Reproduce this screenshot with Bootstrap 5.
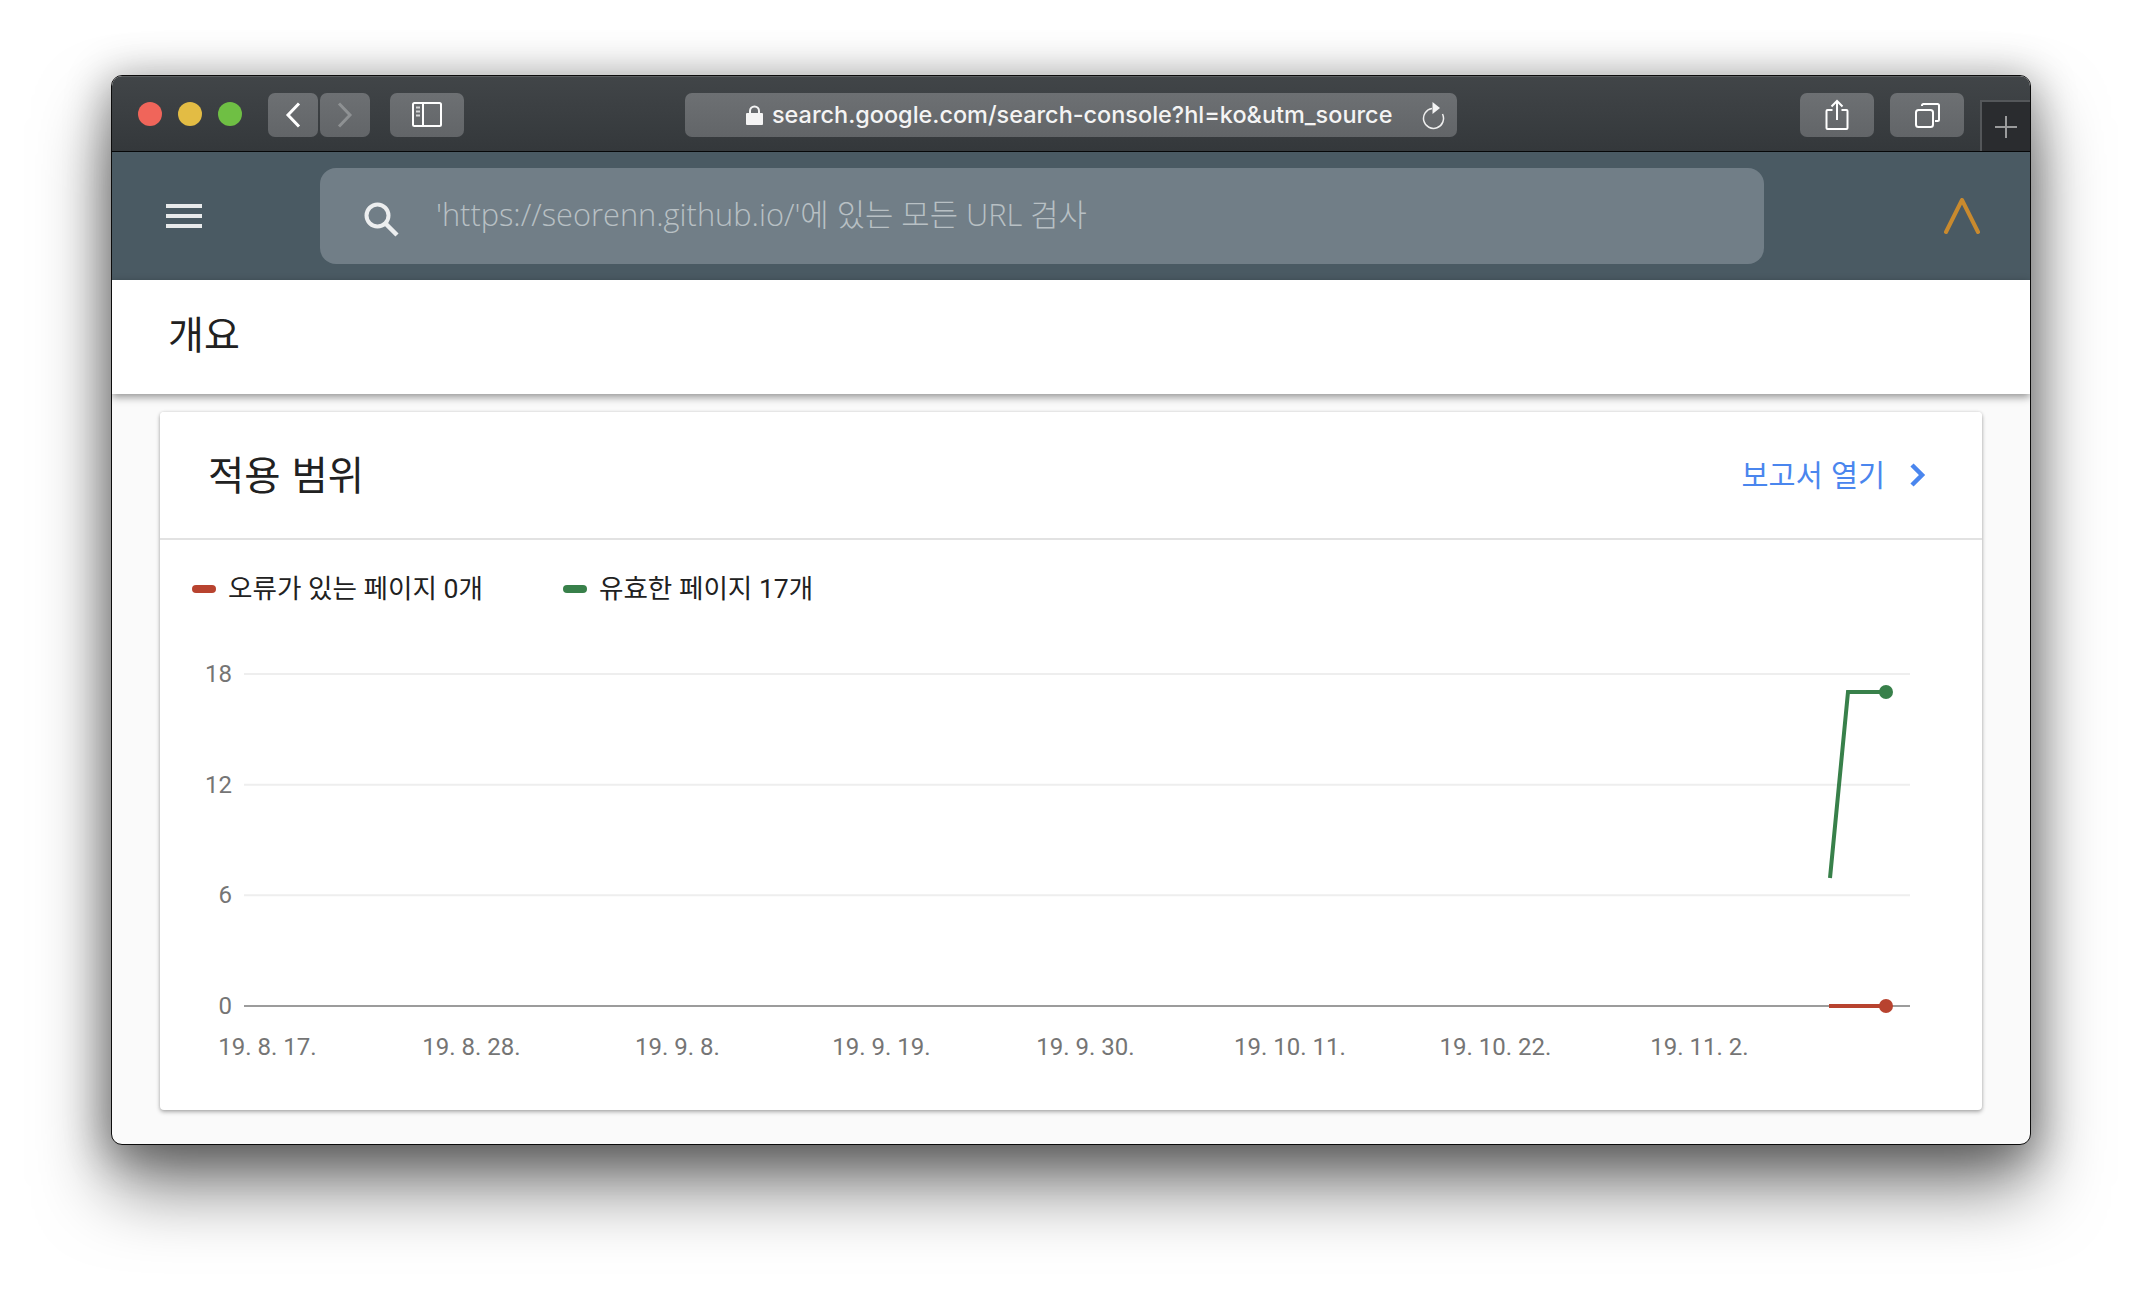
<!DOCTYPE html>
<html lang="ko">
<head>
<meta charset="utf-8">
<title>개요</title>
<link rel="stylesheet" href="https://cdn.jsdelivr.net/npm/bootstrap@5.3.0/dist/css/bootstrap.min.css">
<style>
html,body{background:#fff;margin:0;height:100%;overflow:hidden}
body{font-family:Roboto,"Noto Sans CJK KR",sans-serif;padding:75px 0 0 111px}
.mac-win{width:1920px;height:1070px;border:1px solid #0c0c0c;border-radius:11px;background:#fafafa;box-shadow:0 42px 72px 0 rgba(0,0,0,.52),0 6px 40px 6px rgba(0,0,0,.3);overflow:hidden;box-sizing:border-box}
.title-bar{height:76px;padding:16px 0 0 26px;background:linear-gradient(#414548,#34383b);border-bottom:1px solid #060708;border-top:1px solid #5c5f61}
.dot{width:24px;height:24px;border-radius:50%;margin-top:9px}
.tb-btn{height:44px;border-radius:7px;background:linear-gradient(#6d7073,#626568);border:0;padding:0;flex:none}
.tb-back{width:50px;margin-left:26px}
.tb-fwd{width:50px;margin-left:2px}
.tb-side{width:74px;margin-left:20px}
.url-field{width:772px;margin-left:221px;color:#f4f4f4;position:relative;font-family:Inter,Roboto,sans-serif;font-size:23.45px;font-weight:500;padding-left:61px}
.tb-share{width:74px;margin-left:343px}
.tb-copy{width:74px;margin-left:16px}
.plus-tab{width:50px;height:51px;margin-left:16px;margin-top:7px;background:#2a2c2f;border-left:2px solid #54575a;border-top:2px solid #54575a}
.url-text{white-space:nowrap;margin-left:1px}
.reload-ic{position:absolute;left:736px;top:8px}
.g-head{height:128px;background:#4a5a63;padding-left:54px}
.g-search{width:1444px;height:96px;margin-left:118px;background:#717e87;border-radius:16px;padding-left:44px;color:#b8c0c4;font-size:30.8px;font-weight:300;font-family:"Open Sans","Noto Sans CJK KR",sans-serif}
.g-search span{margin-left:36px;margin-bottom:4px;white-space:nowrap}
.search-ic{margin-top:7px}
.caret-ic{margin-left:180px}
.page-head{height:114px;background:#fff;padding:0 0 10px 56px;font-size:39px;color:#212121;font-family:"Noto Sans CJK KR",sans-serif;box-shadow:0 3px 8px rgba(0,0,0,.42);position:relative}
.main-area{padding:18px 48px 0 48px}
.cov-card{height:698px;width:1822px;border:0;border-radius:4px;box-shadow:0 2px 4px rgba(0,0,0,.3),0 0 3px rgba(0,0,0,.12);overflow:hidden}
.cov-head{height:128px;background:#fff;border-bottom:2px solid #e2e2e2;padding:0 55px 0 48px}
.cov-title{font-size:39.400px;color:#212121;font-family:"Noto Sans CJK KR",sans-serif;margin-bottom:5px}
.cov-link{font-size:29.400px;color:#4a86ee;text-decoration:none;font-family:"Noto Sans CJK KR",sans-serif;line-height:1.2}
.cov-link-text{margin-top:-3px;margin-left:2px}
.cov-link svg{margin-left:24px}
.legend-row{padding:29px 32px 0;height:80px;gap:80px;font-size:26.6px;color:#212121;font-family:Roboto,"Noto Sans CJK KR",sans-serif}
.swatch{width:24px;height:8px;border-radius:4px;margin-right:12px}
.sw-red{background:#b8432f}
.sw-green{background:#38804a}
.chart-svg{display:block}
.chart-svg text{font-family:Roboto,sans-serif;font-size:24px;fill:#757575}
</style>
</head>
<body>
<div class="mac-win">
  <div class="title-bar d-flex align-items-start">
    <div class="dot me-3" style="background:#f0655a"></div>
    <div class="dot me-3" style="background:#e3bc44"></div>
    <div class="dot" style="background:#6fbf44"></div>
    <button class="tb-btn tb-back d-flex align-items-center justify-content-center" aria-label="뒤로"><svg width="16" height="26" viewBox="0 0 16 26"><path d="M14 1.500 3 13l11 11.500" fill="none" stroke="#fff" stroke-width="3"/></svg></button>
    <button class="tb-btn tb-fwd d-flex align-items-center justify-content-center" aria-label="앞으로"><svg width="16" height="26" viewBox="0 0 16 26"><path d="M2 1.500 13 13 2 24.500" fill="none" stroke="#8e9193" stroke-width="3"/></svg></button>
    <button class="tb-btn tb-side d-flex align-items-center justify-content-center" aria-label="사이드바"><svg width="32" height="26" viewBox="0 0 32 26"><rect x="2" y="1" width="28" height="23" rx="1.500" fill="none" stroke="#fff" stroke-width="2"/><path d="M12 1v23" stroke="#fff" stroke-width="2"/><path d="M5 5.500h4M5 9.500h4M5 13.500h4" stroke="#d4d5d6" stroke-width="2"/></svg></button>
    <div class="tb-btn url-field d-flex align-items-center">
      <svg width="17" height="20" viewBox="0 0 17 20" class="me-2 flex-none"><path d="M4 9V6a4.500 4.500 0 0 1 9 0v3" fill="none" stroke="#f4f4f4" stroke-width="2"/><rect x="0" y="8" width="17" height="12" rx="1" fill="#f4f4f4"/></svg>
      <span class="url-text">search.google.com/search-console?hl=ko&amp;utm_source</span>
      <svg class="reload-ic" width="24" height="30" viewBox="0 0 24 30"><path d="M11 7.500A10 10 0 1 0 21.500 13" fill="none" stroke="#eee" stroke-width="1.500"/><path d="M11.500 1l7.500 6-7.500 6z" fill="#f4f4f4"/></svg>
    </div>
    <button class="tb-btn tb-share d-flex align-items-center justify-content-center" aria-label="공유"><svg width="24" height="32" viewBox="0 0 24 32"><path d="M7.500 11H2.500a1 1 0 0 0-1 1v17a1 1 0 0 0 1 1h19a1 1 0 0 0 1-1V12a1 1 0 0 0-1-1h-5" fill="none" stroke="#fff" stroke-width="2"/><path d="M12 21V2M6.500 7.500 12 2l5.500 5.500" fill="none" stroke="#fff" stroke-width="2"/></svg></button>
    <button class="tb-btn tb-copy d-flex align-items-center justify-content-center" aria-label="탭"><svg width="25" height="25" viewBox="0 0 25 25"><rect x="1" y="7" width="17" height="17" rx="2.500" fill="none" stroke="#fff" stroke-width="2"/><path d="M7 3V2.500A1.500 1.500 0 0 1 8.500 1h14A1.500 1.500 0 0 1 24 2.500v14a1.500 1.500 0 0 1-1.500 1.500H20" fill="none" stroke="#fff" stroke-width="2"/></svg></button>
    <div class="plus-tab d-flex align-items-center justify-content-center"><svg width="22" height="22" viewBox="0 0 22 22"><path d="M11 0v22M0 11h22" stroke="#9a9b9c" stroke-width="2"/></svg></div>
  </div>

  <div class="g-head d-flex align-items-center">
    <svg width="36" height="24" viewBox="0 0 36 24"><path d="M0 2h36M0 12h36M0 22h36" stroke="#e8eaeb" stroke-width="4"/></svg>
    <div class="g-search d-flex align-items-center">
      <svg width="36" height="36" viewBox="0 0 36 36" class="flex-none search-ic"><circle cx="13.500" cy="13.500" r="11" fill="none" stroke="#eceeef" stroke-width="4"/><path d="M21.500 21.500 33 33" stroke="#eceeef" stroke-width="4.500"/></svg>
      <span>'https://seorenn.github.io/'에 있는 모든 URL 검사</span>
    </div>
    <svg class="caret-ic" width="36" height="36" viewBox="0 0 36 36"><path d="M2 34 18 2l16 32" fill="none" stroke="#c98a2e" stroke-width="4" stroke-linecap="round" stroke-linejoin="round"/></svg>
  </div>

  <div class="page-head d-flex align-items-center">개요</div>

  <div class="main-area">
    <div class="card cov-card">
      <div class="cov-head d-flex align-items-center justify-content-between">
        <div class="cov-title">적용 범위</div>
        <a class="cov-link d-flex align-items-center" href="#"><span class="cov-link-text">보고서 열기</span><svg width="18" height="26" viewBox="0 0 18 26"><path d="M3 3l10 10L3 23" fill="none" stroke="#4a86ee" stroke-width="4.500"/></svg></a>
      </div>
      <div class="legend-row d-flex align-items-start">
        <div class="d-flex align-items-center"><span class="swatch sw-red"></span>오류가 있는 페이지 0개</div>
        <div class="d-flex align-items-center"><span class="swatch sw-green"></span>유효한 페이지 17개</div>
      </div>
      <svg class="chart-svg" width="1822" height="490" viewBox="0 0 1822 490">
        <path d="M84 54H1750M84 164.700H1750M84 275.300H1750" stroke="#eeeeee" stroke-width="2"/>
        <path d="M84 386H1750" stroke="#9c9c9c" stroke-width="2"/>
        <g text-anchor="end" dominant-baseline="central">
          <text x="72" y="54">18</text><text x="72" y="164.700">12</text><text x="72" y="275.300">6</text><text x="72" y="386">0</text>
        </g>
        <g text-anchor="middle">
          <text x="107.500" y="435">19. 8. 17.</text><text x="311.500" y="435">19. 8. 28.</text><text x="517.500" y="435">19. 9. 8.</text><text x="721.500" y="435">19. 9. 19.</text><text x="925.500" y="435">19. 9. 30.</text><text x="1130" y="435">19. 10. 11.</text><text x="1335.500" y="435">19. 10. 22.</text><text x="1539.500" y="435">19. 11. 2.</text>
        </g>
        <path d="M1670 258 1688 72H1726" fill="none" stroke="#38804a" stroke-width="4"/>
        <circle cx="1726" cy="72" r="7" fill="#38804a"/>
        <path d="M1669 386H1726" stroke="#b8432f" stroke-width="4"/>
        <circle cx="1726" cy="386" r="7" fill="#b8432f"/>
      </svg>
    </div>
  </div>
</div>
<script src="https://cdn.jsdelivr.net/npm/bootstrap@5.3.0/dist/js/bootstrap.bundle.min.js"></script>
</body>
</html>
